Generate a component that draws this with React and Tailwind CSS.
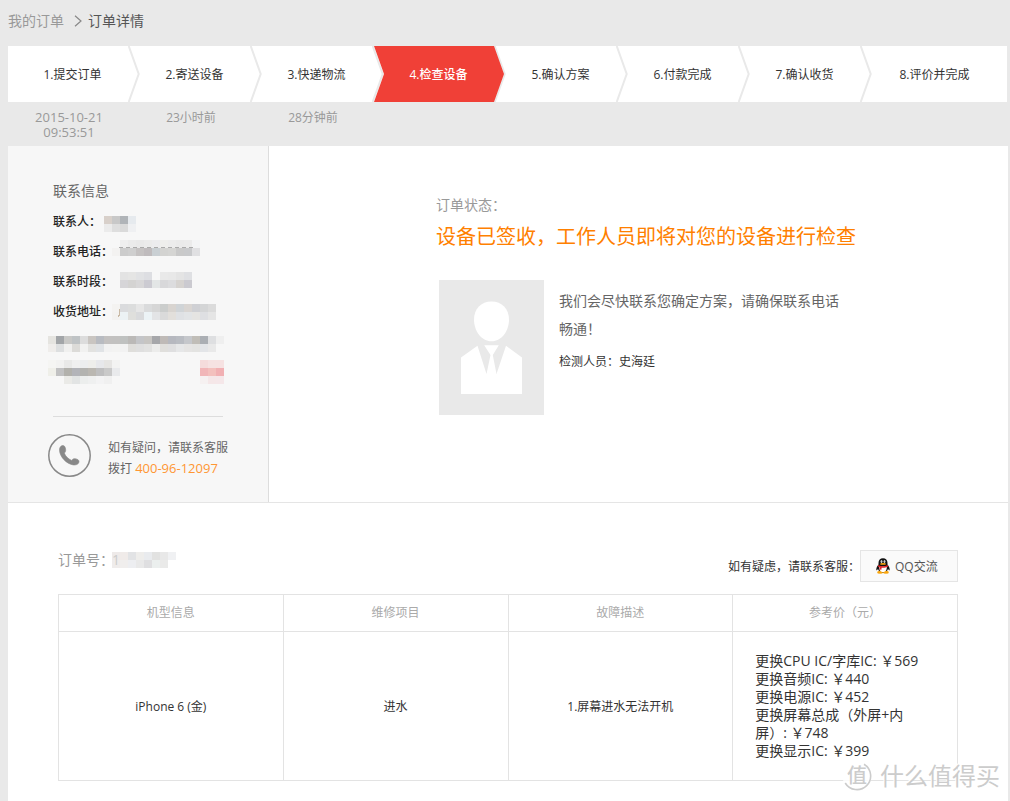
import React from 'react';

const steps = [
  { label: '1.提交订单', time: '2015-10-21 09:53:51' },
  { label: '2.寄送设备', time: '23小时前' },
  { label: '3.快递物流', time: '28分钟前' },
  { label: '4.检查设备', active: true },
  { label: '5.确认方案' },
  { label: '6.付款完成' },
  { label: '7.确认收货' },
  { label: '8.评价并完成' },
];

const prices = [
  '更换CPU IC/字库IC: ￥569',
  '更换音频IC: ￥440',
  '更换电源IC: ￥452',
  '更换屏幕总成（外屏+内屏）: ￥748',
  '更换显示IC: ￥399',
];

// Masked private values, one colour per 8px block, '-' leaves a block empty
const masks = {
  name: [
    'd8d0ca c8c8c8 b0b4b8 e6eaee',
    'ebebeb dedede dadada eff0f2',
  ],
  phone: [
    '- efefef ebebeb e9e9e9 ebebeb ececee eeeeec ececec eaeaea ebebeb f3f4f5',
    'f3f2f1 cccccc cfcfcf c5c2c2 bfbbbd c9cfd3 d3d3d1 d5d5d3 c9c9c9 c8c9cb e0e0e2',
  ],
  period: [
    'e3e3e3 e5e5e4 e1e2e4 dddee2 f7f7f7 e9e9e9 e8e8e8 e4e4e4 dfe0e3',
    'd6d5d8 d4d3d2 d8d7d8 cccbd2 e3e6e6 d8d8da dcdcde d6d3d0 cbcad0',
  ],
  address: [
    'f4f3f1 dadbdd dcdddd e6e6e6 dadbdc d6d6d6 cbcdcc d8d4d0 d0d4d7 d9d5d2 cfd0d4 d4d5d6 dbdbdb',
    'f3f2f0 ecf2f4 dfdfdc d9dadc ecf3f6 e3e4e6 dadada e2dfdb dfe1e4 e2e4e6 e5e4e2 dedfe2 e5e5e5',
  ],
  addressMore: [
    'e5e4e0 a2a5a8 c8c8c6 bfc3c5 dcdcdc c9c5c1 b8bbc1 c3c1c0 c2c1c0 bfc1c0 bbb9b7 c4c5c8 c7c5c2 a6a7aa bfbab7 b6b8bf b9bcc2 c5c7cb c0bdb7 abafb4 dedfe1 efefef',
    'efedeb dddfe0 f0f0ef dcdbd8 f1f1f0 e2e2e0 e0e3e6 f2f2f2 f3f3f2 f2f2f2 dfdedb dfdfdf e2e2e1 ececeb e0dfdc dfdfe0 e6e7e8 e5e4e3 e3e3e1 e3e5e8 e9e9e9 -',
  ],
  addressEnd: [
    'f5f5f3 f2f2f1 e9e9e8 f0f0f0 eceeef eeeeeb e7e8eb e6e5e3 f3f3f2',
    'efefe9 c1c1c2 b2b1ac b3b4b9 b3b3b0 bab7b1 bebebf c9c9c9 e9eaec',
    '- - eaeae7 e2e4e4 eceeed eff0f0 f3f3f4 f0f0f0 -',
  ],
  edit: [
    'f5dcdc f6e2e2 f6e2e2',
    'f1b6b8 f3c0bd f1b0b3',
    'f6f1f1 f5e7e8 f5e7e9',
  ],
  orderNo: [
    'eeeae9 f0ebe9 e2e3e5 eeedeb e9ebee e2e2e1 e8e8e8 f0f1f3',
    'efeceb f0eeed edeef1 e9e9e9 dfdfe1 ebefee eaeae9 -',
  ],
};

function Mask({ rows, top, children }) {
  const cells = rows.map((row) => row.split(' '));
  const width = Math.max(...cells.map((row) => row.length)) * 8;

  return (
    <svg width={width} height="30" shapeRendering="crispEdges" className="shrink-0" aria-hidden="true">
      {cells.map((row, y) =>
        row.map((color, x) =>
          color === '-' ? null : (
            <rect key={`${x}-${y}`} x={x * 8} y={top + y * 8} width="8" height="8" fill={`#${color}`} />
          )
        )
      )}
      {children}
    </svg>
  );
}

function StepArrow() {
  return (
    <svg width="12" height="56" viewBox="0 0 12 56" className="absolute top-0 -right-[10px] z-10" aria-hidden="true">
      <path d="M0.7 0 L10.7 28 L0.7 56" fill="none" stroke="#e9e9e9" strokeWidth="2" />
    </svg>
  );
}

function PhoneIcon() {
  return (
    <svg width="43" height="43" viewBox="0 0 43 43" className="shrink-0" aria-hidden="true">
      <circle cx="21.5" cy="21.5" r="20.7" fill="none" stroke="#888" strokeWidth="1.5" />
      <path
        d="M14.3 11.6 C16.4 11.2 17.3 13 17.6 15.2 C17.8 16.8 17.6 18 16.3 19 C17.4 22.2 20.2 25 23.6 26.4 C24.6 25 25.7 24.5 27.2 24.7 C29.6 25 31.3 26.2 31 28 C30.6 30.4 27.6 31.3 25.2 30.9 C18.4 29.9 11.9 22.8 11.5 16.4 C11.4 14 12.4 12 14.3 11.6 Z"
        fill="#888"
        stroke="#888"
        strokeWidth="0.6"
      />
    </svg>
  );
}

function Avatar() {
  return (
    <svg width="105" height="135" viewBox="0 0 105 135" className="ml-[3px] shrink-0" role="img" aria-label="检测人员">
      <rect width="105" height="135" fill="#e9e9e9" />
      <path
        d="M52.5 21.5 C63 21.5 70 29 70 39.5 C70 51 62.5 61.3 52.5 61.3 C42.5 61.3 35 51 35 39.5 C35 29 42 21.5 52.5 21.5 Z"
        fill="#fff"
      />
      {/* jacket halves, then the tie between them */}
      <path d="M22 114 V77.5 L38.5 65.7 L47.5 94 L51.5 75 L45.2 65.3 H59.8 L53.8 75 L57.5 94 L67 65.7 L83 77.5 V114 Z" fill="#fff" />
    </svg>
  );
}

function QQIcon() {
  return (
    <svg width="14" height="16" viewBox="0 0 14 16" aria-hidden="true">
      <path
        d="M7 0.3 C4.2 0.3 2.5 2.3 2.5 5 L2.5 6.4 C1.2 8 0.2 9.8 0.3 11.7 C0.5 12.8 1.3 12 2 11 C2.6 13.4 4.5 14.7 7 14.7 C9.5 14.7 11.4 13.4 12 11 C12.7 12 13.5 12.8 13.7 11.7 C13.8 9.8 12.8 8 11.5 6.4 L11.5 5 C11.5 2.3 9.8 0.3 7 0.3 Z"
        fill="#111"
      />
      <ellipse cx="4" cy="14.2" rx="2.9" ry="1.5" fill="#f9a60f" />
      <ellipse cx="10" cy="14.2" rx="2.9" ry="1.5" fill="#f9a60f" />
      <path d="M3.3 8.5 H10.7 C11.2 11.5 9.7 14 7 14 C4.3 14 2.8 11.5 3.3 8.5 Z" fill="#fff" />
      <ellipse cx="5.5" cy="3.6" rx="0.9" ry="1.3" fill="#fff" />
      <ellipse cx="8.5" cy="3.6" rx="0.9" ry="1.3" fill="#fff" />
      <circle cx="5.8" cy="3.8" r="0.4" fill="#111" />
      <circle cx="8.2" cy="3.8" r="0.4" fill="#111" />
      <ellipse cx="7" cy="5.9" rx="3" ry="0.9" fill="#f9a60f" />
      <path d="M2.3 7 C5 8.6 9 8.6 11.7 7 L12.1 8.6 C9.8 9.9 7 10 5.6 9.7 L5.4 11.7 L3.5 11.5 L3.7 9.2 L1.9 8.5 Z" fill="#e5262b" />
    </svg>
  );
}

function ContactRow({ label, children }) {
  return (
    <div className="flex h-[30px]">
      <dt className="w-[64px] shrink-0 pt-[5px] pl-[5px] font-medium whitespace-nowrap text-[#222]">{label}</dt>
      <dd>{children}</dd>
    </div>
  );
}

function Watermark() {
  return (
    <div className="pointer-events-none absolute right-2 bottom-[9px] flex items-center gap-2 leading-[32px] text-[#ccc]">
      <span className="relative flex size-[30px] items-center justify-center text-[20px] font-medium">
        <svg width="30" height="30" viewBox="0 0 30 30" className="absolute inset-0" aria-hidden="true">
          <circle cx="15" cy="15" r="14.5" fill="#fff" fillOpacity="0.8" />
          <path d="M22 3.2 A13.7 13.7 0 1 1 3.2 22" fill="none" stroke="#ccc" strokeWidth="1.6" />
        </svg>
        <span className="relative">值</span>
      </span>
      <span className="text-[24px] [text-shadow:-1px_-1px_0_#fff]">什么值得买</span>
    </div>
  );
}

function App() {
  return (
    <div className="flex min-h-screen flex-col bg-[#e9e9e9] pr-[2px] pl-2 font-['Open_Sans','Noto_Sans_CJK_SC',sans-serif] text-[12px] leading-[20px] text-[#333]">
      <nav className="flex items-center pt-[11px] pb-[15px] text-[14px]">
        <a href="#orders" className="text-[#999]">我的订单</a>
        <svg width="8" height="12" viewBox="0 0 8 12" className="mr-[6px] ml-[10px]" aria-hidden="true">
          <path d="M1 0.7 L7 6 L1 11.3" fill="none" stroke="#888" strokeWidth="1.2" />
        </svg>
        <span className="text-[#555]">订单详情</span>
      </nav>

      <ol className="mr-px grid grid-cols-[repeat(7,122fr)_145fr]">
        {steps.map((step, i) => (
          <li key={step.label} className="relative">
            <div
              className={`flex h-14 items-center justify-center bg-white pt-[2px] ${i < 7 ? 'pl-[7px]' : ''} ${step.active ? 'font-medium text-white' : ''}`}
            >
              {step.active && (
                <span className="absolute top-0 -right-2 left-0 z-20 h-14 bg-[#f04037] [clip-path:polygon(0_0,calc(100%-10px)_0,100%_50%,calc(100%-10px)_100%,0_100%,10px_50%)]" />
              )}
              <span className="relative z-30">{step.label}</span>
            </div>
            {i < 7 && <StepArrow />}
            <p className={`mx-auto h-[44px] max-w-20 pt-2 text-center leading-[15px] text-[#999] ${i === 0 ? 'text-[13px]' : ''}`}>
              {step.time}
            </p>
          </li>
        ))}
      </ol>

      <div className="flex border-b border-[#e5e5e5] bg-white">
        <aside className="w-[261px] shrink-0 border-r border-[#ddd] bg-[#f7f7f7] pt-[35px] pb-[25px] pl-10">
          <h2 className="mb-[6px] pl-[5px] text-[14px] text-[#666]">联系信息</h2>
          <dl>
            <ContactRow label="联系人：">
              <div className="-ml-2">
                <Mask rows={masks.name} top={9} />
              </div>
            </ContactRow>
            <ContactRow label="联系电话：">
              <Mask rows={masks.phone} top={3}>
                <path d="M7 10.5 H82" stroke="#aaa" strokeDasharray="4 3" />
              </Mask>
            </ContactRow>
            <ContactRow label="联系时段：">
              <div className="pl-2">
                <Mask rows={masks.period} top={5} />
              </div>
            </ContactRow>
            <ContactRow label="收货地址：">
              <Mask rows={masks.address} top={7}>
                <path d="M7 12 V18 H6 V20" fill="none" stroke="#c9b9a4" />
              </Mask>
            </ContactRow>
          </dl>
          <Mask rows={masks.addressMore} top={9} />
          <div className="flex w-[176px] justify-between">
            <Mask rows={masks.addressEnd} top={3} />
            <Mask rows={masks.edit} top={3} />
          </div>
          <hr className="mt-[29px] ml-[5px] w-[170px] border-[#ddd]" />
          <div className="mt-[17px] flex h-[43px] items-start gap-[17px] text-[#666]">
            <PhoneIcon />
            <p className="pt-1">
              如有疑问，请联系客服
              <br />
              拨打 <a href="tel:400-96-12097" className="text-[13px] text-[#ff9632]">400-96-12097</a>
            </p>
          </div>
        </aside>

        <section className="flex-1 pt-[49px] pl-[167px]">
          <p className="text-[14px] text-[#999]">订单状态：</p>
          <h1 className="mt-[7px] text-[20px] leading-[30px] text-[#ff8000]">设备已签收，工作人员即将对您的设备进行检查</h1>
          <div className="mt-7 flex gap-[15px]">
            <Avatar />
            <div className="max-w-[290px] pt-[7px]">
              <p className="text-[14px] leading-[28px] text-[#666]">我们会尽快联系您确定方案，请确保联系电话畅通！</p>
              <p className="mt-[9px]">检测人员：史海廷</p>
            </div>
          </div>
        </section>
      </div>

      <section className="relative grow bg-white px-[50px] pt-[47px] pb-5">
        <div className="mb-3 flex items-start justify-between">
          <div className="flex h-5 items-center text-[14px] text-[#999]">
            订单号：
            <span className="relative -ml-[2px]">
              <Mask rows={masks.orderNo} top={7} />
              <span className="absolute top-[5px] left-0 text-[#ccc]">1</span>
            </span>
          </div>
          <div className="flex items-center">
            <span className="pt-[2px]">如有疑虑，请联系客服：</span>
            <button className="flex h-8 w-[98px] items-center gap-[5px] border border-[#e5e5e5] bg-[#fafafa] pl-[15px] text-[#555]">
              <QQIcon />
              <span className="pt-[2px]">QQ交流</span>
            </button>
          </div>
        </div>

        <table className="w-full table-fixed border-collapse text-center">
          <thead>
            <tr className="h-[37px] text-[#aaa]">
              <th className="border border-[#e3e3e3] font-normal">机型信息</th>
              <th className="border border-[#e3e3e3] font-normal">维修项目</th>
              <th className="border border-[#e3e3e3] font-normal">故障描述</th>
              <th className="border border-[#e3e3e3] font-normal">参考价（元）</th>
            </tr>
          </thead>
          <tbody>
            <tr>
              <td className="border border-[#e3e3e3] pt-[2px]">iPhone 6 (金)</td>
              <td className="border border-[#e3e3e3] pt-[2px]">进水</td>
              <td className="border border-[#e3e3e3] pt-[2px]">1.屏幕进水无法开机</td>
              <td className="border border-[#e3e3e3] py-5 pr-7 pl-[22px] text-left text-[14px] leading-[18px]">
                {prices.map((price) => (
                  <p key={price}>{price}</p>
                ))}
              </td>
            </tr>
          </tbody>
        </table>
        <Watermark />
      </section>
    </div>
  );
}

export default App;
